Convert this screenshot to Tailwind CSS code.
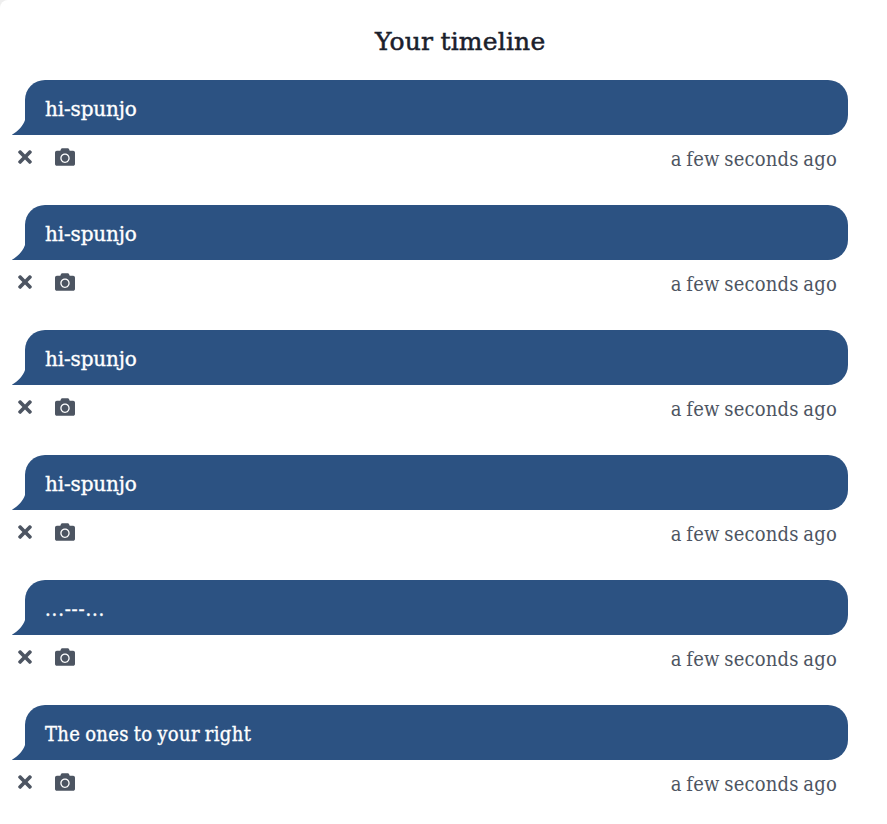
<!DOCTYPE html>
<html lang="en">
<head>
<meta charset="utf-8">
<title>Your timeline</title>
<script src="https://cdn.jsdelivr.net/npm/@tailwindcss/browser@4"></script>
</head>
<body class="bg-[#eeeeee]">
<svg class="hidden">
  <symbol id="times" viewBox="0 0 352 512"><path fill="currentColor" d="M242.72 256l100.07-100.07c12.28-12.28 12.28-32.19 0-44.48l-22.24-22.24c-12.28-12.28-32.19-12.28-44.48 0L176 189.28 75.93 89.21c-12.28-12.28-32.19-12.28-44.48 0L9.21 111.45c-12.28 12.28-12.28 32.19 0 44.48L109.28 256 9.21 356.07c-12.28 12.28-12.28 32.19 0 44.48l22.24 22.24c12.28 12.28 32.2 12.28 44.48 0L176 322.72l100.07 100.07c12.28 12.28 32.2 12.28 44.48 0l22.24-22.24c12.28-12.28 12.28-32.19 0-44.48L242.72 256z"/></symbol>
  <symbol id="camera" viewBox="0 0 512 512"><path fill="currentColor" d="M512 144v288c0 26.5-21.5 48-48 48H48c-26.5 0-48-21.5-48-48V144c0-26.5 21.5-48 48-48h88l12.3-32.9c7-18.7 24.9-31.1 44.9-31.1h125.5c20 0 37.9 12.4 44.9 31.1L376 96h88c26.5 0 48 21.5 48 48zM376 288c0-66.2-53.8-120-120-120s-120 53.8-120 120 53.8 120 120 120 120-53.8 120-120zm-32 0c0 48.5-39.5 88-88 88s-88-39.5-88-88 39.5-88 88-88 88 39.5 88 88z"/></symbol>
  <symbol id="tail" viewBox="0 0 16 20"><path fill="#2c5282" d="M13 0V5C11 11 6 16.5 -.5 20H16V0Z"/></symbol>
</svg>
<main class="h-[824px] overflow-hidden rounded-tl-lg bg-white pt-[22px] font-['DejaVu_Serif_Condensed','DejaVu_Serif',serif] [font-stretch:condensed]">
  <h1 class="ml-[375px] h-[58px] whitespace-nowrap font-['DejaVu_Serif',serif] [font-stretch:normal] text-[25px] leading-10 tracking-[0.2px] [word-spacing:-1px] text-[#1a202c] [-webkit-text-stroke:0.5px_#1a202c]">Your timeline</h1>
  <div id="timeline" class="ml-[25px] w-[823px]"></div>
</main>
<template id="post">
  <article class="h-[125px]">
    <div class="relative h-[55px] rounded-[20px] rounded-bl-none bg-[#2c5282] pl-5 text-[20px] leading-[58px] text-white">
      <svg class="absolute bottom-0 -left-[13px] h-5 w-4"><use href="#tail"/></svg>
      <span class="message whitespace-pre [-webkit-text-stroke:0.35px_#ffffff]"></span>
    </div>
    <div class="-ml-[7px] flex h-12 items-start pr-[11px] text-[#4d5562]">
      <svg class="mt-3 h-5 w-[14px]"><use href="#times"/></svg>
      <svg class="mt-3 ml-[23px] size-5"><use href="#camera"/></svg>
      <span class="ml-auto text-[20px] leading-12 whitespace-nowrap tracking-[0.2px] [word-spacing:-1.3px]">a few seconds ago</span>
    </div>
  </article>
</template>
<script>
const wide = "font-['DejaVu_Serif',serif] [font-stretch:normal] tracking-[-0.15px]";
const dots = "tracking-[0.85px]";
const sentence = "tracking-[0.35px] [word-spacing:-1.2px]";
const messages = [
  ["hi-spunjo", wide], ["hi-spunjo", wide], ["hi-spunjo", wide], ["hi-spunjo", wide],
  ["...---...", dots], ["The ones to your right", sentence]
];
const template = document.getElementById("post");
for (const [text, style] of messages) {
  const post = template.content.cloneNode(true);
  const message = post.querySelector(".message");
  message.textContent = text;
  message.className += " " + style;
  document.getElementById("timeline").append(post);
}
</script>
</body>
</html>
